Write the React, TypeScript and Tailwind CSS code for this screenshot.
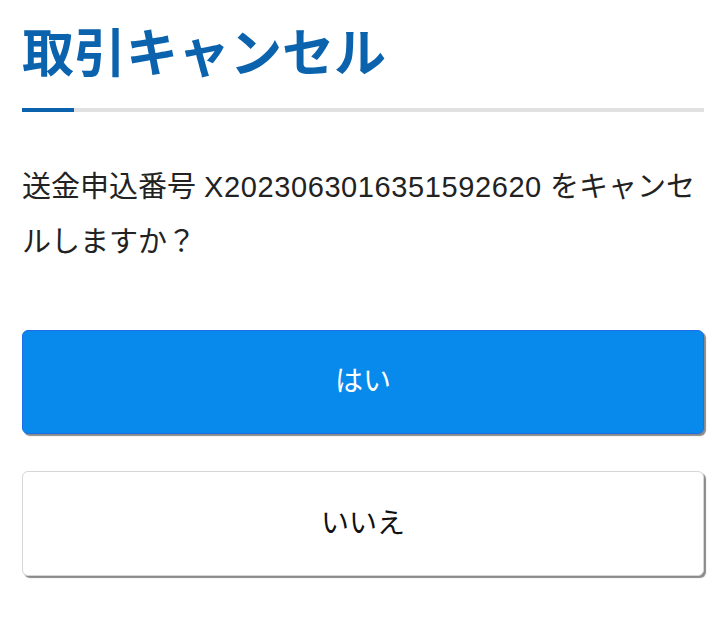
import React from "react";

function App() {
  const requestNo = "X2023063016351592620";

  return (
    <div
      className="min-h-[640px] w-full bg-white px-[22px] pt-[24px] text-[#222]"
      style={{ fontFamily: '"Liberation Sans", "Noto Sans CJK JP", sans-serif' }}
    >
      <h1 className="text-[52px] font-bold leading-none text-[#0b62ad] [font-family:'Noto_Sans_CJK_JP',sans-serif]">
        取引キャンセル
      </h1>

      {/* divider with accent */}
      <div className="mt-[32px] flex h-[4px] w-full">
        <div className="w-[52px] bg-[#0b62ad]" />
        <div className="flex-1 bg-[#e1e1e1]" />
      </div>

      <p className="mt-[48px] text-[29px] leading-[55px]">
        送金申込番号 <span className="tracking-[0.6px]">{requestNo}</span> をキャンセルしますか？
      </p>

      <div className="mt-[60px] flex flex-col gap-[37px]">
        <button className="h-[104px] w-full rounded-[6px] border border-[#1b6ee6] bg-[#078aec] text-[28px] text-white shadow-[2px_2px_1px_#8a8a8a]">
          はい
        </button>
        <button className="h-[105px] w-full rounded-[6px] border border-[#d6d6d6] bg-white text-[28px] text-[#111] shadow-[2px_2px_1px_#8a8a8a]">
          いいえ
        </button>
      </div>
    </div>
  );
}

export default App;
